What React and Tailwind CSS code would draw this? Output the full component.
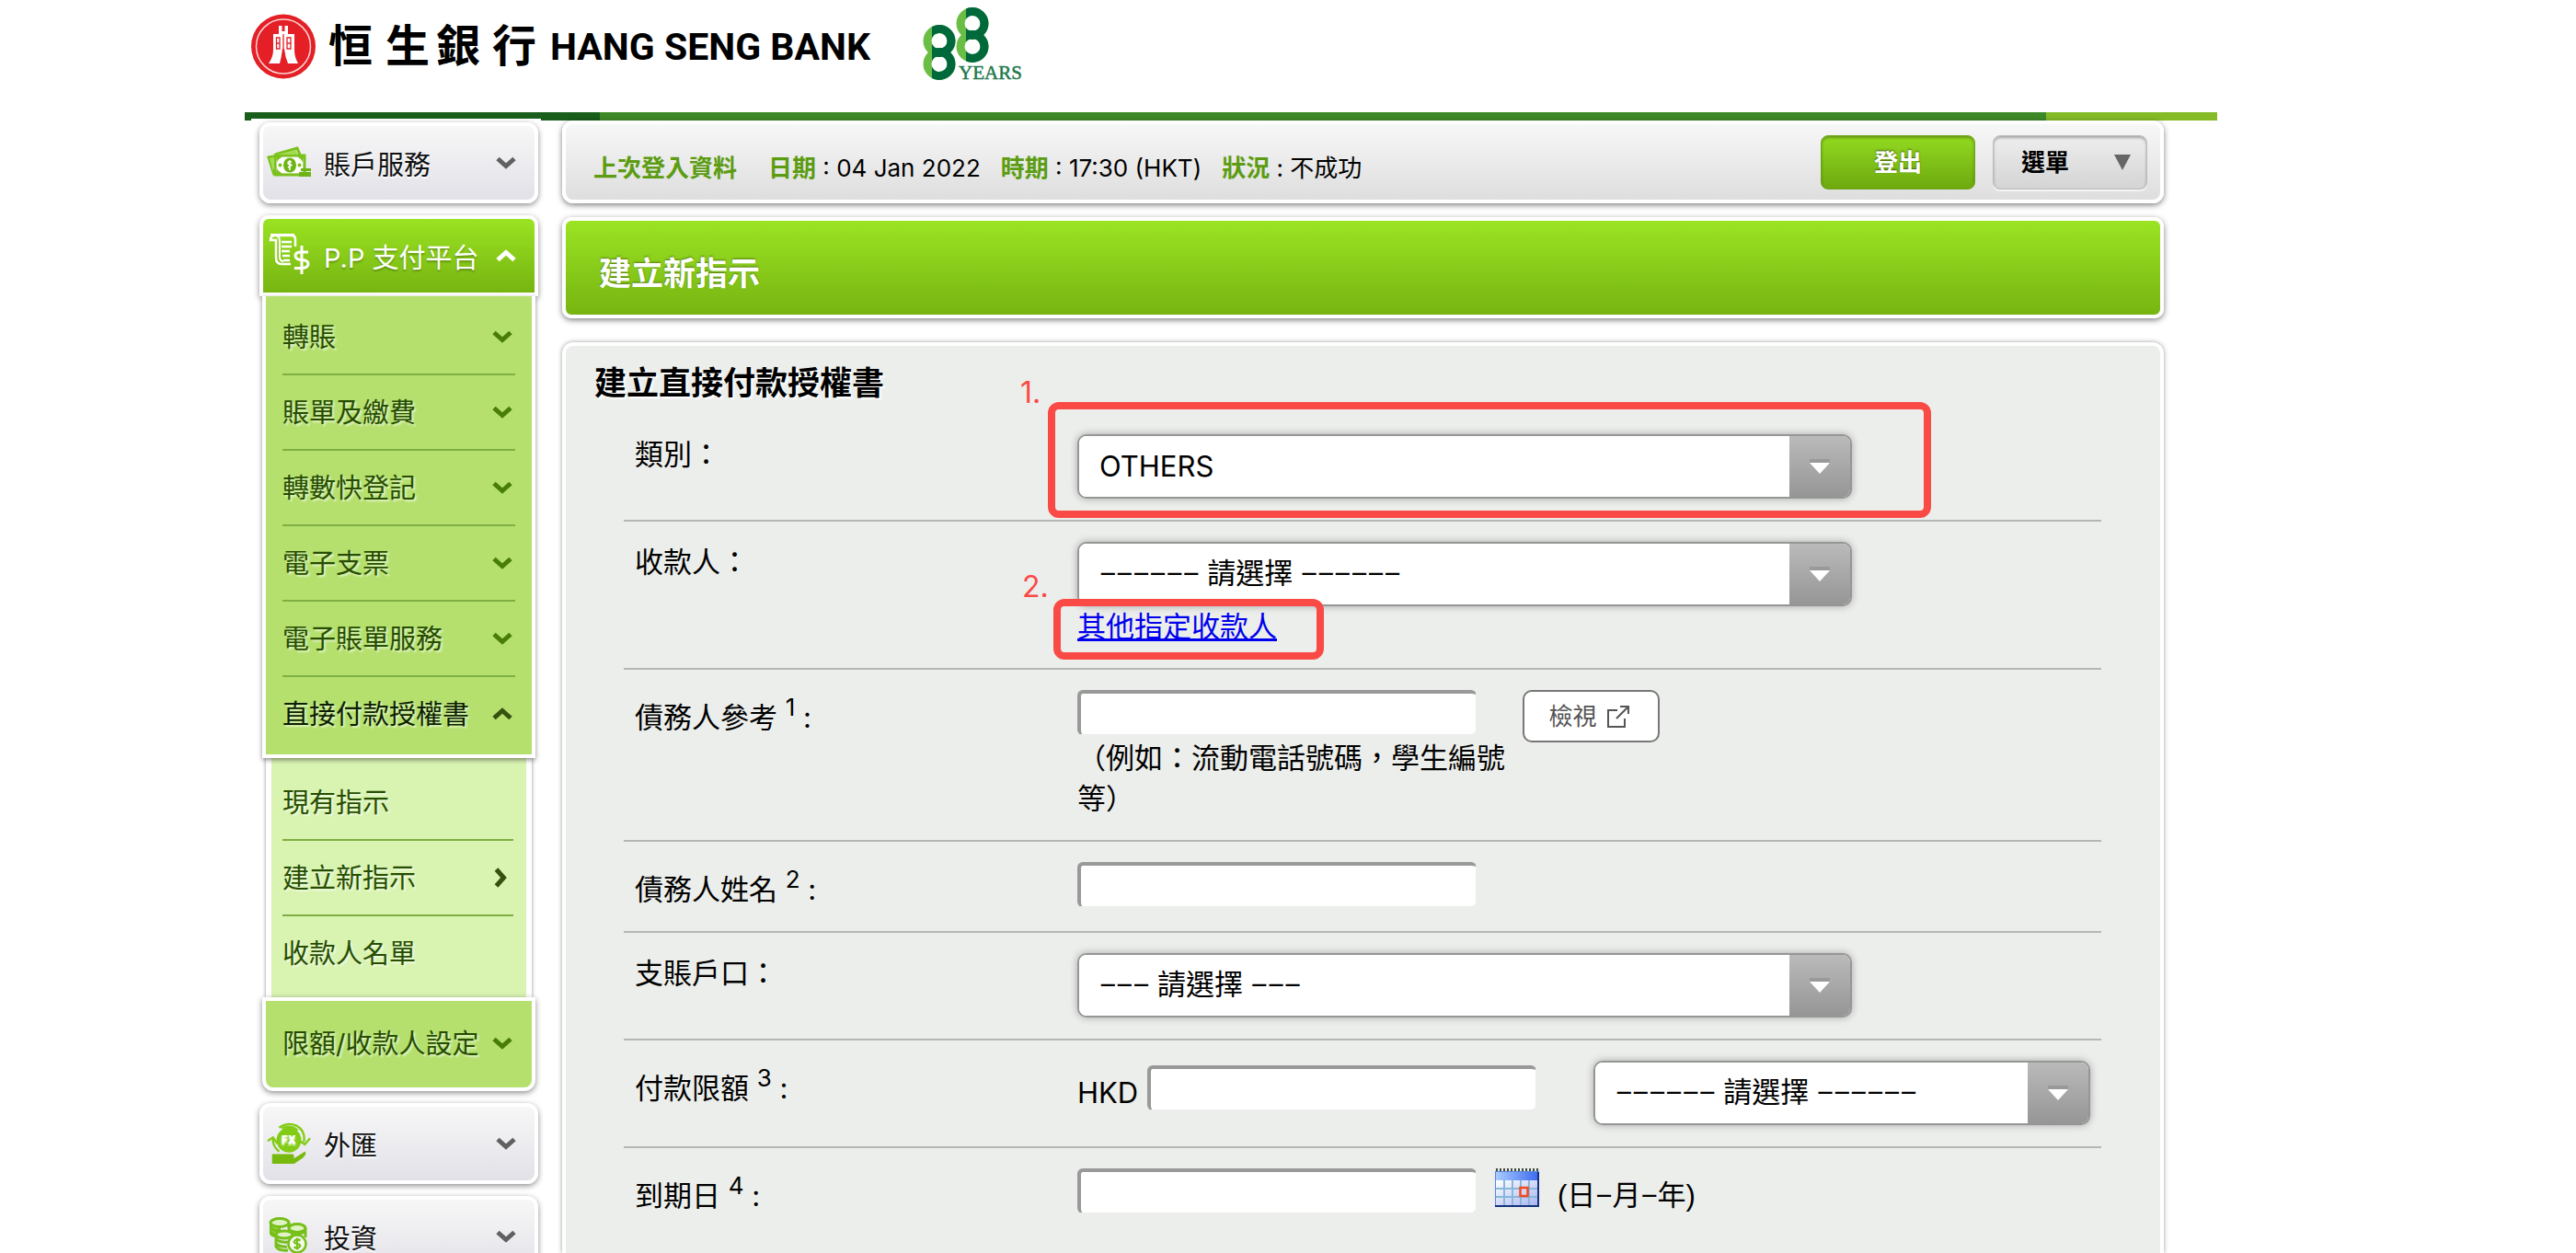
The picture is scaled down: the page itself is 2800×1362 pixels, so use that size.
import React from "react";
import { clsx } from "clsx";

const Chevron = ({ direction = "down", className }) => (
  <svg
    viewBox="0 0 22 22"
    className={clsx(
      "size-[22px] shrink-0 fill-none stroke-current",
      direction === "up" && "rotate-180",
      direction === "right" && "-rotate-90",
      className
    )}
    aria-hidden="true"
  >
    <path d="M2 6.5L11 14.5L20 6.5" strokeWidth="5" />
  </svg>
);

const MoneyIcon = () => (
  <svg viewBox="0 0 48 36" className="w-12 shrink-0" aria-hidden="true">
    <g fill="none" stroke="#7ac11c" strokeWidth="3">
      <path d="M9 9L33 2L36 9" />
      <path d="M8 31L2 12L8 11" />
      <rect x="9" y="10" width="32" height="21" />
    </g>
    <path d="M11 9L32 4L34 9ZM7 28L3 13L8 12Z" fill="#a3dc50" />
    <path d="M10 11h6q-1 5-5 6zM10 30h6q-1-5-5-6zM40 11h-6q1 5 5 6z" fill="#7ac11c" />
    <rect x="11" y="12" width="28" height="17" rx="7" fill="#fff" />
    <ellipse cx="25" cy="20.500" rx="7" ry="8" fill="#6db414" />
    <circle cx="14.500" cy="20.500" r="2" fill="#7ac11c" />
    <circle cx="35.500" cy="20.500" r="2" fill="#7ac11c" />
    <path d="M27 17q-4-1-4 1t3 2t-3 3m2-8v11" stroke="#fff" strokeWidth="1.5" fill="none" />
    <path d="M37 24h11v3H37zM35 28h13v5H35z" fill="#6db414" />
  </svg>
);

const BillIcon = () => (
  <svg viewBox="0 0 48 50" className="w-12 shrink-0" fill="none" stroke="#fff" aria-hidden="true">
    <path d="M9 3H27Q31 3 31 7V15M9 3Q4 3 4 8H10V27Q10 34 16 34H26" strokeWidth="2.500" />
    <path d="M10 3Q14 4 14 9V26Q14 31 18 31M4 2H30" strokeWidth="2" />
    <path d="M16 10H27M16 15H27M16 20H25M17 25H25M18 30H25" strokeWidth="2.500" />
    <path d="M45 21H37Q31 21 31 25T38 29.500T45 34T38 38.500H30M38 14V45" strokeWidth="3" />
  </svg>
);

const FxIcon = () => (
  <svg viewBox="0 0 50 48" className="w-12 shrink-0" fill="none" aria-hidden="true">
    <circle cx="25" cy="20" r="14" fill="#83cc16" />
    <path d="M14 6Q24-1 34 4Q44 10 42 22M36 20L43 25L49 18" stroke="#83cc16" strokeWidth="2.500" />
    <path d="M14 33Q6 27 7 17M1 21L7 17L12 24M17 7Q27 2 35 9" stroke="#83cc16" strokeWidth="2.500" />
    <path d="M6 36H19L29 36Q33 38 29 41H20L32 40L43 33Q46 35 41 40L31 47H6Z" fill="#78b90f" />
    <text
      x="25"
      y="24"
      textAnchor="middle"
      fontSize="12"
      className="fill-white font-['Inter',sans-serif] font-black"
    >
      FX
    </text>
  </svg>
);

const CoinsIcon = () => (
  <svg viewBox="0 0 48 42" className="w-12 shrink-0" fill="none" stroke="#77bf1a" aria-hidden="true">
    <path d="M4 6V18Q6 22 14 21V11Z" fill="#9bd943" strokeWidth="2" />
    <ellipse cx="14" cy="6" rx="10" ry="4.500" fill="#dff3c4" strokeWidth="3" />
    <path d="M24 6V12M4 11Q8 16 14 14M4 16Q8 20 13 19" strokeWidth="3" />
    <ellipse cx="33" cy="12" rx="9" ry="4.500" fill="#dff3c4" strokeWidth="3" />
    <path d="M42 12V22M25 15Q33 20 42 16" strokeWidth="3" />
    <ellipse cx="19" cy="19" rx="9" ry="4" fill="#dff3c4" strokeWidth="3" />
    <path d="M10 20V32Q13 37 23 36M10 24Q15 28 23 27M10 29Q15 33 22 32" strokeWidth="3" />
    <circle cx="33" cy="29" r="9.500" fill="#f4f9ec" strokeWidth="2.500" />
    <path d="M36.500 25.500Q33 23 30.500 25.500T33 29T35.500 32.500T29.500 32.500M33 22.500V35.500" strokeWidth="2.200" />
  </svg>
);

const ShareIcon = () => (
  <svg viewBox="0 0 26 26" className="size-[26px] fill-none stroke-current" aria-hidden="true">
    <path d="M12 6H2V24H20V15M15 2H24V10M24 2L11 15" strokeWidth="2" />
  </svg>
);

const CalendarIcon = () => (
  <svg viewBox="0 0 48 42" className="h-[42px] w-12" aria-hidden="true">
    <defs>
      <linearGradient id="cal-top" x1="0" x2="1">
        <stop offset="0" stopColor="#a9ccff" />
        <stop offset="1" stopColor="#3c6bef" />
      </linearGradient>
      <linearGradient id="cal-body" x1="0" y1="0" x2="1" y2="1">
        <stop offset="0" stopColor="#ffffff" />
        <stop offset="1" stopColor="#a9b4f2" />
      </linearGradient>
    </defs>
    <rect y="3" width="48" height="39" fill="#5b86dc" />
    <rect x="1" y="4" width="46" height="9" fill="url(#cal-top)" />
    <rect x="1" y="13" width="46" height="27" fill="url(#cal-body)" />
    <path d="M1 1.500H48" stroke="#3d4a3d" strokeWidth="3" strokeDasharray="2 2" />
    <path d="M10 13V40M19 13V40M28 13V40M37 13V40M1 22H47M1 31H47" stroke="#86b8da" strokeWidth="2" />
    <path d="M0 41H47V4" stroke="#16317f" strokeWidth="2" fill="none" />
    <rect x="27.500" y="21" width="8" height="9" fill="#d8d4f4" stroke="#f04a22" strokeWidth="2.500" />
  </svg>
);

const BankLogo = () => (
  <svg viewBox="0 0 860 100" className="h-[100px] w-[860px]" role="img" aria-label="Hang Seng Bank">
    <circle cx="42" cy="50.500" r="35" fill="#e41f26" />
    <circle cx="42" cy="50.500" r="29.500" fill="none" stroke="#fbd5d4" strokeWidth="1.500" />
    <path
      d="M37 28H40.500V34H43.500V28H47V37H54V54Q54 62 58 69H47Q44 62 43 53H41Q40 62 38 69H26Q31 62 31 54V37H37Z"
      fill="#fff"
    />
    <path
      d="M34.500 41V53H38V41ZM46 41V53H50V41ZM34.500 47H38M46 47H50M42 37V53"
      fill="none"
      stroke="#e41f26"
      strokeWidth="1.300"
    />
    <text
      x="91 153 208 269"
      y="67"
      fontSize="48"
      className="fill-black font-['Noto_Sans_CJK_TC',sans-serif] font-bold"
    >
      恒生銀行
    </text>
    <text x="332" y="65" fontSize="41" className="fill-black font-['Roboto',sans-serif] font-bold">
      HANG SENG BANK
    </text>
    <defs>
      <clipPath id="dark-left">
        <rect x="747" y="20" width="40" height="80" />
      </clipPath>
      <clipPath id="dark-right">
        <rect x="784" y="0" width="40" height="80" />
      </clipPath>
    </defs>
    <g fill="none" strokeWidth="9">
      <g stroke="#6abd45">
        <circle cx="755" cy="44.500" r="13" />
        <circle cx="755" cy="69.500" r="13" />
        <circle cx="791" cy="25.500" r="13" />
        <circle cx="791" cy="50.500" r="13" />
      </g>
      <g stroke="#00693c">
        <g clipPath="url(#dark-left)">
          <circle cx="755" cy="44.500" r="13" />
          <circle cx="755" cy="69.500" r="13" />
        </g>
        <g clipPath="url(#dark-right)">
          <circle cx="791" cy="25.500" r="13" />
          <circle cx="791" cy="50.500" r="13" />
        </g>
      </g>
    </g>
    <text
      x="776"
      y="86"
      fontSize="21"
      strokeWidth="0.5"
      className="fill-[#21794c] stroke-[#21794c] font-['Liberation_Serif',serif]"
    >
      YEARS
    </text>
  </svg>
);

const SideCard = ({ icon, label, active }) => (
  <button
    type="button"
    className={clsx(
      "flex h-[88px] shrink-0 items-center gap-[14px] border-4 border-white pr-5 pl-1 text-left shadow-[0_2px_6px_rgba(0,0,0,0.45)]",
      active
        ? "relative rounded-t-[10px] bg-linear-to-b from-[#9ae322] to-[#77b411] text-white text-shadow-[0_2px_2px_rgba(0,0,0,0.25)]"
        : "rounded-xl bg-linear-to-b from-[#f7f7f7] to-[#e2e1e8] text-[#111] text-shadow-[0_2px_2px_#fff]"
    )}
  >
    {icon}
    <span className="flex-1 whitespace-nowrap pt-1">{label}</span>
    <Chevron
      direction={active ? "up" : "down"}
      className={active ? "text-white" : "text-[#606060]"}
    />
  </button>
);

const SideItem = ({ label, direction, current }) => (
  <li className="h-[82px] border-b-2 border-[#7fae45] last:border-transparent">
    <a
      href="#"
      className={clsx(
        "flex h-full items-center justify-between whitespace-nowrap pr-[3px] text-shadow-[2px_2px_2px_rgba(255,255,255,0.6)]",
        current ? "text-[#0c1f00]" : "text-[#264d00]"
      )}
    >
      {label}
      {direction && (
        <Chevron
          direction={direction}
          className={direction === "down" ? "text-[#477d08]" : "text-[#35500f]"}
        />
      )}
    </a>
  </li>
);

const Sidebar = () => (
  <nav className="relative -mt-0.5 flex w-[315px] shrink-0 flex-col gap-[13px] bg-white pt-1 pr-[3px] pl-[9px] text-[29px] leading-none">
    <SideCard icon={<MoneyIcon />} label="賬戶服務" />
    <div className="flex flex-col">
      <SideCard icon={<BillIcon />} label="P.P 支付平台" active />
      <ul className="z-10 mx-[3px] border-x-4 border-b-4 border-white bg-[#b5e06d] px-[18px] pt-1 pb-0.5 shadow-[0_2px_5px_rgba(0,0,0,0.45)]">
        <SideItem label="轉賬" direction="down" />
        <SideItem label="賬單及繳費" direction="down" />
        <SideItem label="轉數快登記" direction="down" />
        <SideItem label="電子支票" direction="down" />
        <SideItem label="電子賬單服務" direction="down" />
        <SideItem label="直接付款授權書" direction="up" current />
      </ul>
      <ul className="mx-[7px] border-x-[6px] border-white bg-[#d9f3b1] pt-2 pr-[14px] pb-[6px] pl-3 shadow-[0_0_4px_rgba(0,0,0,0.45)]">
        <SideItem label="現有指示" />
        <SideItem label="建立新指示" direction="right" />
        <SideItem label="收款人名單" />
      </ul>
      <ul className="z-10 mx-[3px] rounded-b-xl border-4 border-white bg-[#b5e06d] px-[18px] py-[6px] shadow-[0_2px_6px_rgba(0,0,0,0.45)]">
        <SideItem label="限額/收款人設定" direction="down" />
      </ul>
    </div>
    <SideCard icon={<FxIcon />} label="外匯" />
    <SideCard icon={<CoinsIcon />} label="投資" />
  </nav>
);

const InfoPair = ({ label, value }) => (
  <p>
    <b className="text-[#5c9c12]">{label}</b> : {value}
  </p>
);

const InfoBar = () => (
  <div className="flex h-[90px] items-center rounded-xl border-4 border-white bg-linear-to-b from-[#f7f7f7] to-[#dedede] pr-[14px] pl-[30px] text-[26px] shadow-[0_2px_6px_rgba(0,0,0,0.5)]">
    <div className="flex flex-1 gap-[22px] pt-3">
      <b className="mr-3 text-[#5c9c12]">上次登入資料</b>
      <InfoPair label="日期" value="04 Jan 2022" />
      <InfoPair label="時期" value="17:30 (HKT)" />
      <InfoPair label="狀況" value="不成功" />
    </div>
    <button
      type="button"
      className="mr-[19px] h-[59px] w-[168px] rounded-lg border border-[#6fa51b] bg-linear-to-b from-[#92da20] to-[#6ea90f] font-bold text-white shadow-[inset_0_2px_3px_rgba(0,0,0,0.3)] text-shadow-[0_-1px_2px_rgba(0,0,0,0.5)]"
    >
      登出
    </button>
    <button
      type="button"
      className="flex h-[59px] w-[168px] items-center justify-between rounded-lg border border-[#bbb] bg-linear-to-b from-[#eeeeee] to-[#d4d4d4] pr-[17px] pl-[30px] font-bold text-black shadow-[inset_0_2px_3px_rgba(0,0,0,0.3),0_2px_0_#f4f4f4]"
    >
      選單
      <svg viewBox="0 0 18 17" className="w-[18px] fill-[#666]" aria-hidden="true">
        <path d="M0 0H18L9 17Z" />
      </svg>
    </button>
  </div>
);

const Row = ({ id, label, note, children }) => (
  <div className="grid grid-cols-[493px_1fr] border-b-2 border-[#b5b7b4] pt-[22px] pb-[23px] last:border-transparent">
    <label htmlFor={id} className={clsx("pl-3", note && "pt-2")}>
      {label}
      {note ? (
        <>
          {" "}
          <sup className="text-[26px]">{note}</sup> :
        </>
      ) : (
        "："
      )}
    </label>
    <div>{children}</div>
  </div>
);

const SelectBox = ({ id, option, label, className }) => (
  <div
    className={clsx(
      "flex h-[70px] overflow-hidden rounded-[10px] border-2 border-[#969696] bg-white shadow-[0_0_8px_rgba(0,0,0,0.3)]",
      className
    )}
  >
    <select
      id={id}
      aria-label={label}
      className="min-w-0 flex-1 appearance-none bg-white pl-[22px] text-black outline-none"
    >
      <option>{option}</option>
    </select>
    <span className="flex w-[66px] items-center justify-center bg-linear-to-b from-[#bababa] to-[#969696]">
      <svg viewBox="0 0 24 18" className="w-6" aria-hidden="true">
        <path d="M1 1H23V5H1Z" fill="#999" />
        <path d="M1 5H23L12 17Z" fill="#fff" />
      </svg>
    </span>
  </div>
);

const TextBox = ({ id, className }) => (
  <input
    id={id}
    type="text"
    className={clsx(
      "block h-[49px] rounded-[6px] border-t-4 border-r border-b border-l-4 border-t-[#999] border-r-[#eceeeb] border-b-[#eceeeb] border-l-[#999] bg-white px-2 outline-none",
      className
    )}
  />
);

const MandateForm = () => (
  <form className="flex-1 rounded-t-xl border-4 border-b-0 border-white bg-[#eceeeb] pt-[18px] pr-16 pl-[63px] text-[31px] leading-[44px] shadow-[0_0_5px_rgba(0,0,0,0.4)]">
    <h2 className="-ml-8 pb-3 text-[35px] font-bold text-shadow-[2px_2px_2px_#fff]">
      建立直接付款授權書
    </h2>
    <Row id="category" label="類別">
      <div className="relative w-[842px]">
        <SelectBox id="category" option="OTHERS" />
        <span className="absolute -top-[67px] -left-[62px] text-[32px] text-[#fa4a46]">1.</span>
        <span className="pointer-events-none absolute -top-[35px] -left-8 h-[126px] w-[960px] rounded-xl border-8 border-[#fa4a46]" />
      </div>
    </Row>
    <Row id="payee" label="收款人">
      <SelectBox
        id="payee"
        option="−−−−−− 請選擇 −−−−−−"
        className="w-[842px] font-['Liberation_Sans','Noto_Sans_CJK_TC',sans-serif]"
      />
      <div className="relative">
        <a href="#" className="text-[#0000ee] underline">
          其他指定收款人
        </a>
        <span className="absolute -top-[43px] -left-[60px] text-[32px] text-[#fa4a46]">2.</span>
        <span className="pointer-events-none absolute -top-2 -left-[26px] h-[66px] w-[294px] rounded-xl border-8 border-[#fa4a46]" />
      </div>
    </Row>
    <Row id="reference" label="債務人參考" note="1">
      <div className="flex items-start gap-3">
        <div className="w-[472px]">
          <TextBox id="reference" className="mb-[3px] w-[434px]" />
          （例如：流動電話號碼，學生編號等）
        </div>
        <button
          type="button"
          className="flex h-[57px] w-[149px] items-center justify-center gap-[10px] rounded-[10px] border-2 border-[#777] bg-white pr-1 text-[26px] text-[#555]"
        >
          檢視
          <ShareIcon />
        </button>
      </div>
    </Row>
    <Row id="debtor" label="債務人姓名" note="2">
      <TextBox id="debtor" className="w-[434px]" />
    </Row>
    <Row id="account" label="支賬戶口">
      <SelectBox
        id="account"
        option="−−− 請選擇 −−−"
        className="w-[842px] font-['Liberation_Sans','Noto_Sans_CJK_TC',sans-serif]"
      />
    </Row>
    <Row id="limit" label="付款限額" note="3">
      <div className="flex items-center">
        <span className="w-[76px]">HKD</span>
        <TextBox id="limit" className="mr-[62px] mb-3 w-[423px]" />
        <SelectBox
          option="−−−−−− 請選擇 −−−−−−"
          label="付款限額類別"
          className="w-[540px] font-['Liberation_Sans','Noto_Sans_CJK_TC',sans-serif]"
        />
      </div>
    </Row>
    <Row id="expiry" label="到期日" note="4">
      <div className="flex items-start">
        <TextBox id="expiry" className="mr-5 w-[434px]" />
        <button type="button" aria-label="日曆" className="mr-5">
          <CalendarIcon />
        </button>
        <span className="pt-2 font-['Liberation_Sans','Noto_Sans_CJK_TC',sans-serif]">(日−月−年)</span>
      </div>
    </Row>
  </form>
);

export default function App() {
  return (
    <div className="flex h-screen flex-col overflow-hidden bg-white pr-[390px] pl-[266px] font-['Inter','Noto_Sans_CJK_TC',sans-serif] text-black">
      <header className="h-[122px] shrink-0">
        <BankLogo />
      </header>
      <div className="flex h-[9px] shrink-0 bg-[#3f8a28]">
        <span className="w-[18%] bg-[#1a5e1b]" />
        <span className="ml-auto w-[186px] bg-[#84bb26]" />
      </div>
      <div className="flex min-h-0 flex-1 pl-[7px]">
        <Sidebar />
        <main className="flex min-w-0 flex-1 flex-col pr-[58px] pl-[23px]">
          <InfoBar />
          <h1 className="mt-[15px] mb-[26px] flex h-[110px] shrink-0 items-center rounded-[10px] border-4 border-white bg-linear-to-b from-[#9be423] to-[#77b411] pt-3 pl-9 text-[35px] font-bold text-white shadow-[0_2px_6px_rgba(0,0,0,0.5)] text-shadow-[0_-1px_2px_rgba(0,0,0,0.4)]">
            建立新指示
          </h1>
          <MandateForm />
        </main>
      </div>
    </div>
  );
}
